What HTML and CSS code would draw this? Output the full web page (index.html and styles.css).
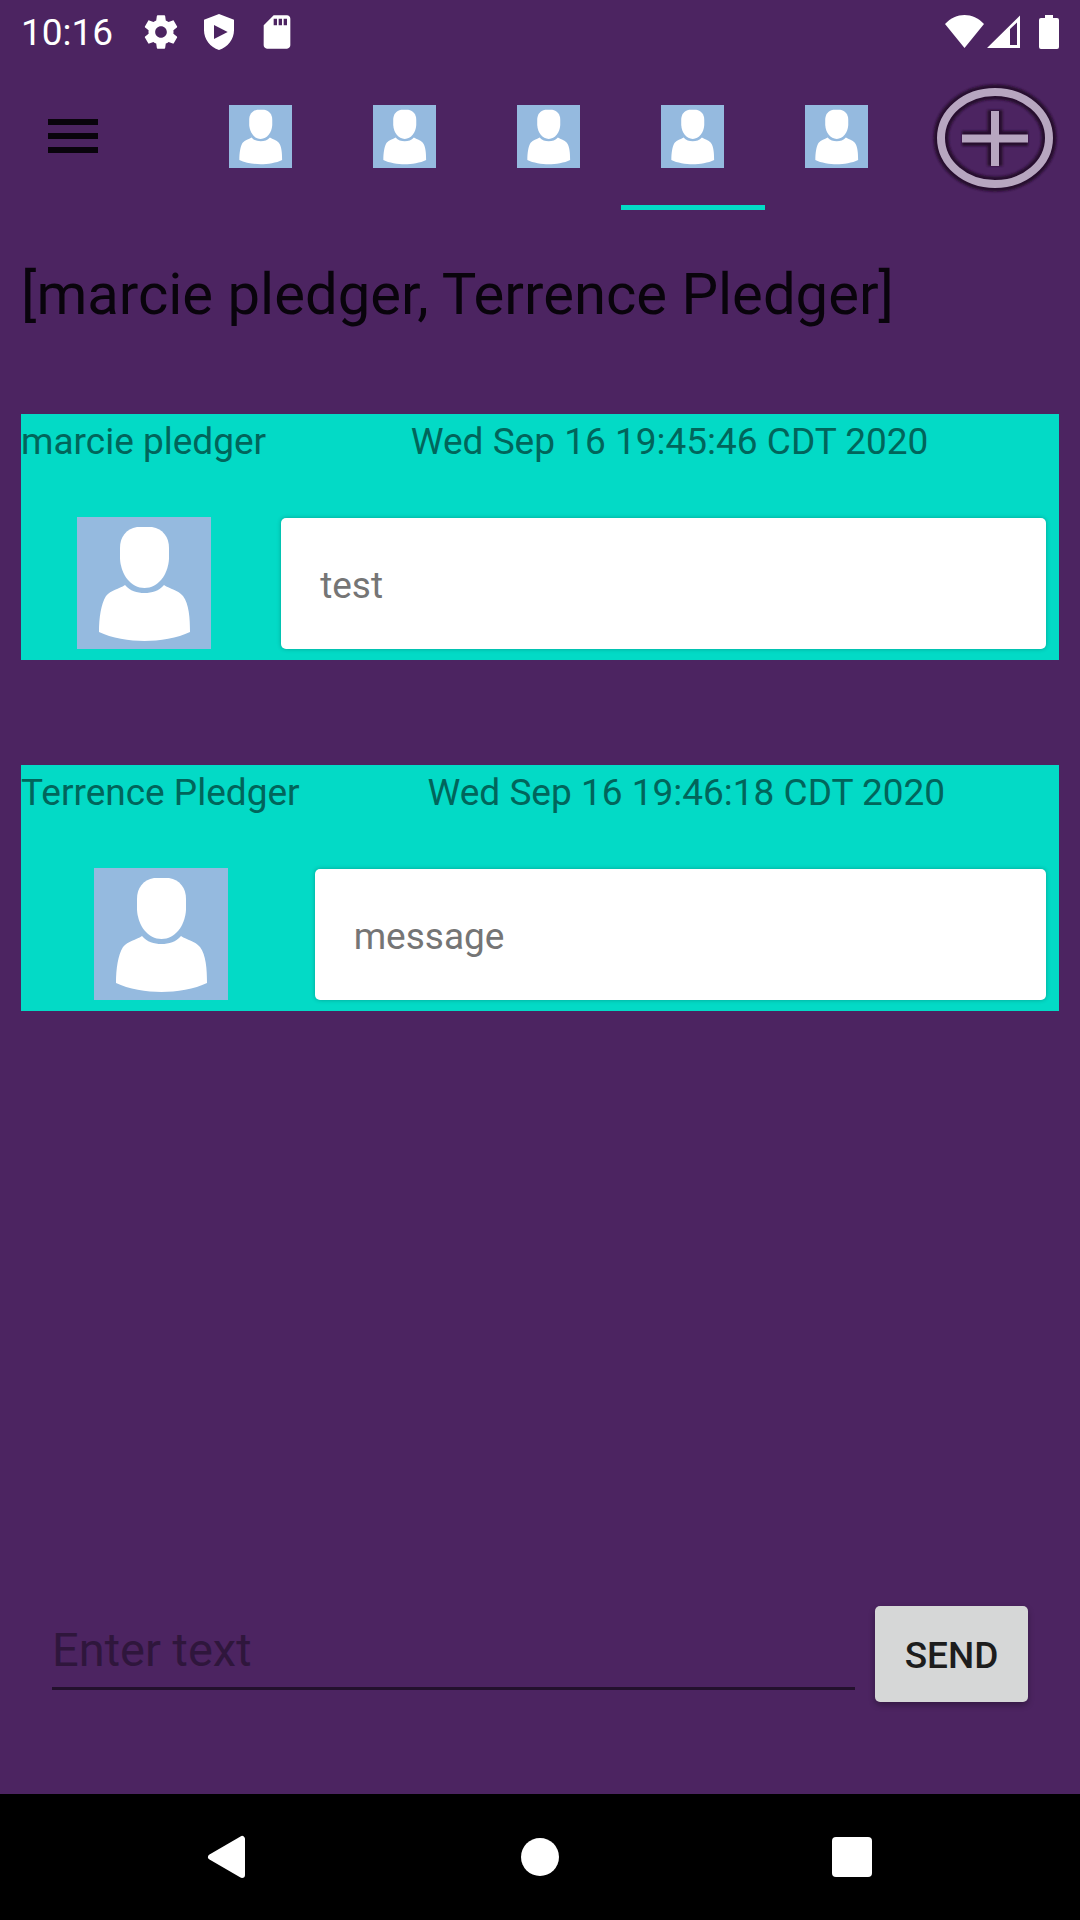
FILE: index.html
```html
<!DOCTYPE html>
<html lang="en">
<head>
<meta charset="utf-8">
<meta name="viewport" content="width=device-width, initial-scale=1">
<title>Messages</title>
<link rel="stylesheet" href="styles.css">
</head>
<body>
<svg class="sprite" aria-hidden="true">
  <symbol id="person" viewBox="0 0 134 132" preserveAspectRatio="none">
    <rect width="134" height="132" fill="#95badf"/>
    <path fill="#fff" d="M60 10H75C86 12 92 20 92 31V42C91 58 81 71 67.500 71C54 71 44 58 43 42V31C43 20 49 12 60 10Z"/>
    <path fill="#fff" d="M48 68C53 74 60 76 67.500 76C75 76 82 74 87 68C93 72 101 73 106 79C112 87 113 101 113 115C101 121 82 124 67.500 124C53 124 34 121 22 115C22 101 24 87 29 79C34 73 42 72 48 68Z"/>
  </symbol>
</svg>

<div class="status">
  <span class="clock">10:16</span>
  <svg class="status-icon" viewBox="0 0 24 24"><path d="M19.430 12.980c.04-.32.07-.64.07-.98s-.03-.66-.07-.98l2.110-1.650c.19-.15.24-.42.12-.64l-2-3.460c-.12-.22-.39-.3-.61-.22l-2.490 1c-.52-.4-1.080-.73-1.690-.98l-.38-2.650C14.460 2.180 14.250 2 14 2h-4c-.25 0-.46.18-.49.42l-.38 2.650c-.61.25-1.170.59-1.690.98l-2.490-1c-.23-.09-.49 0-.61.22l-2 3.460c-.13.22-.07.49.12.64l2.110 1.650c-.04.32-.07.65-.07.98s.03.66.07.98l-2.110 1.650c-.19.15-.24.42-.12.64l2 3.460c.12.22.39.3.61.22l2.490-1c.52.4 1.080.73 1.690.98l.38 2.650c.03.24.24.42.49.42h4c.25 0 .46-.18.49-.42l.38-2.650c.61-.25 1.170-.59 1.690-.98l2.490 1c.23.09.49 0 .61-.22l2-3.460c.12-.22.07-.49-.12-.64l-2.110-1.650zM12 15.500c-1.930 0-3.500-1.570-3.500-3.500s1.570-3.500 3.500-3.500 3.500 1.570 3.500 3.500-1.570 3.500-3.500 3.500z"/></svg>
  <svg class="status-icon" viewBox="0 0 24 24"><path fill-rule="evenodd" d="M12 1.200L3 4.600V11C3 16.500 6.800 21.300 12 22.800C17.200 21.300 21 16.500 21 11V4.600ZM9 7.800L17.200 12L9 16.200Z"/></svg>
  <svg class="status-icon" viewBox="0 0 24 24"><path fill-rule="evenodd" d="M18 2h-8L4.020 8 4 20c0 1.100.9 2 2 2h12c1.100 0 2-.9 2-2V4c0-1.100-.9-2-2-2zM10 4h2v4h-2zM13 4h2v4h-2zM16 4h2v4h-2z"/></svg>
  <svg class="signals" viewBox="0 0 116 36"><path d="M1 10C12 -2 29 -2 40 10L20.500 34Z"/><path fill-rule="evenodd" d="M43 34L76 1.500V34ZM66 15V31H73V8.500Z"/><path d="M101 1H109V4H113Q115 4 115 6V33Q115 35 113 35H97Q95 35 95 33V6Q95 4 97 4H101Z"/></svg>
</div>

<header class="toolbar">
  <button class="menu" aria-label="Menu"><svg viewBox="0 0 50 36"><path d="M0 0H50V6H0ZM0 14H50V20H0ZM0 28H50V34H0Z"/></svg></button>
  <nav class="tabs" aria-label="Conversations">
    <button class="tab" aria-label="Conversation 1"><svg><use href="#person"/></svg></button>
    <button class="tab" aria-label="Conversation 2"><svg><use href="#person"/></svg></button>
    <button class="tab" aria-label="Conversation 3"><svg><use href="#person"/></svg></button>
    <button class="tab tab-active" aria-label="Conversation 4" aria-current="true"><svg><use href="#person"/></svg></button>
    <button class="tab" aria-label="Conversation 5"><svg><use href="#person"/></svg></button>
  </nav>
  <button class="add" aria-label="New conversation">
    <svg viewBox="0 0 130 114">
      <defs><filter id="soft" x="-10%" y="-10%" width="120%" height="120%"><feGaussianBlur stdDeviation="1.300"/></filter></defs>
      <g fill="none" stroke="#28102f" filter="url(#soft)"><ellipse cx="65" cy="58" rx="54" ry="46" stroke-width="15"/><path stroke-width="15" stroke-linejoin="round" d="M65 30V86M32 58.500H98"/></g>
      <g fill="none" stroke="#b7a6c0" stroke-width="8"><ellipse cx="65" cy="58" rx="54" ry="46"/><path d="M65 31V86M32 58.500H98"/></g>
    </svg>
  </button>
</header>

<main class="conversation">
  <h1 class="title">[marcie pledger, Terrence Pledger]</h1>
  <section class="messages">
    <article class="message">
      <span class="name">marcie pledger</span>
      <time class="date">Wed Sep 16 19:45:46 CDT 2020</time>
      <svg class="avatar"><use href="#person"/></svg>
      <p class="bubble">test</p>
    </article>
    <article class="message">
      <span class="name">Terrence Pledger</span>
      <time class="date">Wed Sep 16 19:46:18 CDT 2020</time>
      <svg class="avatar"><use href="#person"/></svg>
      <p class="bubble">message</p>
    </article>
  </section>
  <form class="composer">
    <input class="entry" type="text" placeholder="Enter text" aria-label="Enter text">
    <button class="send" type="button">SEND</button>
  </form>
</main>

<nav class="system" aria-label="System">
  <button class="key" aria-label="Back"><svg viewBox="0 0 44 44"><path stroke="#fff" stroke-width="6" stroke-linejoin="round" d="M5 22L36 4V40Z"/></svg></button>
  <button class="key" aria-label="Home"><svg viewBox="0 0 44 44"><circle cx="22" cy="22" r="19"/></svg></button>
  <button class="key" aria-label="Recent apps"><svg viewBox="0 0 44 44"><rect x="2" y="2" width="40" height="40" rx="4"/></svg></button>
</nav>
</body>
</html>
```

FILE: styles.css
```css
* {
  box-sizing: border-box;
}

body {
  margin: 0;
  min-height: 100vh;
  display: flex;
  flex-direction: column;
  background: #4c2461;
  font-family: Roboto, "Noto Sans", sans-serif;
  font-size: 37px;
  line-height: 44px;
}

button {
  border: 0;
  padding: 0;
  background: none;
  font: inherit;
  display: flex;
  align-items: center;
  justify-content: center;
}

.sprite {
  display: none;
}

.status {
  height: 63px;
  padding: 0 20px 0 21px;
  display: flex;
  align-items: center;
  gap: 18px;
  color: #fff;
  fill: #fff;
}

.clock {
  margin-right: 10px;
  padding-top: 2px;
}

.status-icon {
  width: 40px;
  height: 40px;
}

.signals {
  width: 116px;
  height: 36px;
  margin-left: auto;
}

.toolbar {
  height: 147px;
  padding: 0 20px 0 21px;
  display: flex;
  align-items: stretch;
}

.menu {
  width: 104px;
}

.menu svg {
  width: 50px;
  height: 36px;
  fill: #09040c;
}

.tabs {
  flex: 1;
  display: flex;
  margin: 0 21px 0 64px;
}

.tab {
  flex: 1;
  padding-right: 1px;
  border-top: 5px solid transparent;
  border-bottom: 5px solid transparent;
}

.tab-active {
  border-bottom-color: #03dac6;
}

.tab svg {
  width: 63px;
  height: 63px;
}

.add {
  width: 130px;
}

.add svg {
  width: 130px;
  height: 114px;
}

.conversation {
  flex: 1;
  display: flex;
  flex-direction: column;
  padding: 50px 21px 92px;
}

.title {
  margin: 0 0 86px;
  color: #09040c;
  font-size: 58px;
  line-height: 68px;
  font-weight: 400;
}

.messages {
  flex: 1;
  display: flex;
  flex-direction: column;
  gap: 105px;
}

.message {
  display: grid;
  grid-template-columns: max-content 1fr;
  grid-template-rows: 103px 132px;
  column-gap: 14px;
  padding: 0 13px 11px 0;
  background: #03dac6;
  color: #01655b;
}

.name,
.date {
  padding-top: 6px;
}

.name {
  padding-right: 1px;
}

.date {
  padding-left: 12px;
  text-align: center;
}

.avatar {
  width: 134px;
  height: 132px;
  justify-self: center;
}

.bubble {
  margin: 1px 0 0;
  padding: 4px 39px 0;
  display: flex;
  align-items: center;
  border-radius: 5px;
  background: #fff;
  box-shadow: 0 0 4px rgba(0, 0, 0, 0.25);
  color: #757575;
}

.composer {
  display: flex;
  gap: 20px;
  padding: 0 31px;
}

.entry {
  flex: 1;
  min-width: 0;
  height: 84px;
  padding: 6px 0 0;
  border: 0;
  border-bottom: 3px solid #23112d;
  outline: 0;
  background: none;
  color: #09040c;
  font: inherit;
  font-size: 47px;
}

.entry::placeholder {
  color: #2f163c;
  opacity: 1;
}

.send {
  width: 153px;
  height: 96px;
  padding-top: 3px;
  border-radius: 5px;
  background: #d6d7d7;
  box-shadow: 0 3px 6px rgba(0, 0, 0, 0.3);
  color: #1d1d1d;
  font-weight: 500;
}

.system {
  height: 126px;
  padding: 0 72px;
  display: flex;
  background: #000;
}

.key {
  flex: 1;
}

.key svg {
  width: 44px;
  height: 44px;
  fill: #fff;
}
```
